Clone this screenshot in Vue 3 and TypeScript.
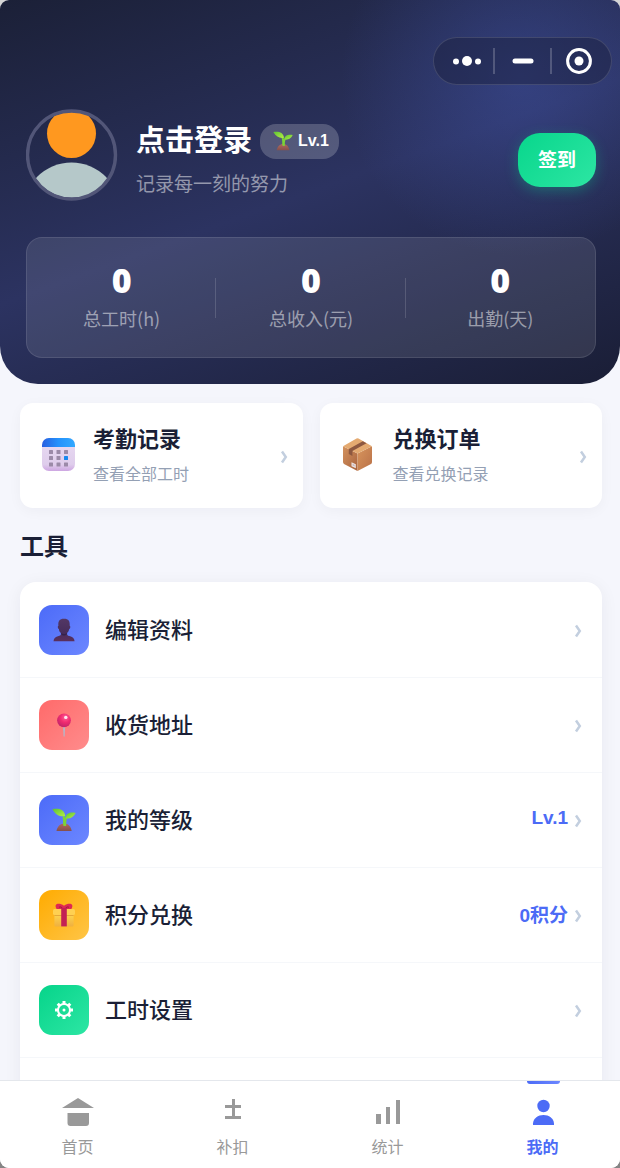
<script setup lang="ts">
import { ref } from 'vue'

interface Stat { value: number; label: string }
interface Entry { icon: string; title: string; hint: string }
interface Tool { icon: string; tone: string; label: string; value?: string }
interface Tab { id: string; label: string }

const stats: Stat[] = [
  { value: 0, label: '总工时(h)' },
  { value: 0, label: '总收入(元)' },
  { value: 0, label: '出勤(天)' },
]
const entries: Entry[] = [
  { icon: 'calendar', title: '考勤记录', hint: '查看全部工时' },
  { icon: 'box', title: '兑换订单', hint: '查看兑换记录' },
]
const tools: Tool[] = [
  { icon: 'bust', tone: 'blue', label: '编辑资料' },
  { icon: 'pin', tone: 'red', label: '收货地址' },
  { icon: 'sprout', tone: 'blue', label: '我的等级', value: 'Lv.1' },
  { icon: 'gift', tone: 'amber', label: '积分兑换', value: '0积分' },
  { icon: 'gear', tone: 'green', label: '工时设置' },
]
const tabs: Tab[] = [
  { id: 'home', label: '首页' },
  { id: 'adjust', label: '补扣' },
  { id: 'chart', label: '统计' },
  { id: 'mine', label: '我的' },
]
const active = ref('mine')
</script>

<template>
  <div class="app">
    <svg class="defs" width="0" height="0" aria-hidden="true">
      <defs>
        <linearGradient id="leaf" x1="0" y1="0" x2="1" y2="1"><stop offset="0" stop-color="#5cc433" /><stop offset="1" stop-color="#b4ee45" /></linearGradient>
        <linearGradient id="soil" x1="0" y1="0" x2="0" y2="1"><stop offset="0" stop-color="#b06a5e" /><stop offset="1" stop-color="#854f4c" /></linearGradient>
        <linearGradient id="calTop" x1="0" y1="0" x2="1" y2="0"><stop offset="0" stop-color="#285fe0" /><stop offset="0.5" stop-color="#2492fc" /><stop offset="1" stop-color="#31a9ff" /></linearGradient>
        <linearGradient id="calBody" x1="0" y1="0" x2="0" y2="1"><stop offset="0" stop-color="#e9dcf2" /><stop offset="0.8" stop-color="#dfcdec" /><stop offset="1" stop-color="#cda6e2" /></linearGradient>
        <linearGradient id="boxLeft" x1="0" y1="0" x2="1" y2="1"><stop offset="0" stop-color="#d3925e" /><stop offset="1" stop-color="#a9633f" /></linearGradient>
        <linearGradient id="boxRight" x1="0" y1="0" x2="1" y2="1"><stop offset="0" stop-color="#d8955d" /><stop offset="1" stop-color="#b97148" /></linearGradient>
        <linearGradient id="bustFill" x1="0" y1="0" x2="0" y2="1"><stop offset="0" stop-color="#533765" /><stop offset="0.6" stop-color="#472d5c" /><stop offset="1" stop-color="#5b2f5d" /></linearGradient>
        <radialGradient id="pinHead" cx="0.6" cy="0.3" r="0.7"><stop offset="0" stop-color="#ff6197" /><stop offset="0.5" stop-color="#f12c70" /><stop offset="1" stop-color="#c4246a" /></radialGradient>
        <linearGradient id="giftFill" x1="0" y1="0" x2="0" y2="1"><stop offset="0" stop-color="#ffd650" /><stop offset="1" stop-color="#efb040" /></linearGradient>
        <clipPath id="calClip"><rect x="1" y="1" width="33" height="33" rx="7" /></clipPath>
        <clipPath id="avatarClip"><circle cx="46" cy="46" r="43" /></clipPath>
      </defs>
      <symbol id="sprout" viewBox="0 0 24 24">
        <path d="M4.500 23c.7-4.400 3.700-7.400 7.700-7.400 4.200 0 6.800 3.200 7.500 7.400z" fill="url(#soil)" />
        <path d="M11.200 17.500c-.2-4.400 0-6.100-.8-9l2.200-.4.800 2.200 1-1.800 1.200.7c-1.600 3-1.300 5.300-1.400 8.500-1 .5-2 .5-3-.2z" fill="#7bd436" />
        <path d="M.4 1.200c5.700-1.200 12-.1 12.800 6.800C8.200 9 4 7.200.4 1.200z" fill="url(#leaf)" />
        <path d="M23.700 4.900c-4.500-1.200-9.900 0-10.300 5.300 5.100.8 8.100-1.100 10.300-5.300z" fill="url(#leaf)" />
      </symbol>
      <symbol id="calendar" viewBox="0 0 35 35">
        <g clip-path="url(#calClip)">
          <rect x="1" y="1" width="33" height="33" fill="url(#calBody)" />
          <rect x="1" y="1" width="33" height="9" fill="url(#calTop)" />
        </g>
        <g fill="#9b8aa8">
          <rect x="8" y="13" width="4" height="4" rx="0.5" /><rect x="15.5" y="13" width="4" height="4" rx="0.5" /><rect x="23" y="13" width="4" height="4" rx="0.5" />
          <rect x="8" y="19" width="4" height="4" rx="0.5" /><rect x="15.5" y="19" width="4" height="4" rx="0.5" />
          <rect x="8" y="25.5" width="4" height="4" rx="0.5" /><rect x="15.5" y="25.5" width="4" height="4" rx="0.5" /><rect x="23" y="25.5" width="4" height="4" rx="0.5" />
        </g>
        <rect x="23" y="19" width="4" height="4" rx="0.5" fill="#1688ef" />
      </symbol>
      <symbol id="box" viewBox="0 0 35 35">
        <path d="M2 9.2 16.500 16.500V34L3 26.900Q2 26.300 2 25z" fill="url(#boxLeft)" />
        <path d="M16.500 16.500 31 9.200V25q0 1.400-1 1.900L16.500 34z" fill="url(#boxRight)" />
        <path d="M2 9.200 15.500 1.500q1-.6 2 0L31 9.200l-14.500 7.400z" fill="#e4aa71" />
        <path d="m7.800 12.100 14-7.900 3.700 2.100-14.100 7.700v5l-3.600-1.900z" fill="#8d5840" />
        <path d="m10.500 25.200 4.300 2.100v4l-4.300-2.100z" fill="#eee5e3" />
        <path d="m11.500 26.700 2.200 1v1.800l-2.200-1z" fill="#c9bac0" />
      </symbol>
      <symbol id="bust" viewBox="0 0 24 24">
        <path d="M1.500 23.300c.2-3.200 2-4.300 5.200-5.200 2.300-.7 2.400-1.700 2.200-3.200C7.400 14 7 12.400 6.900 11c-1.300-.4-1.500-3.200-.5-3.300C6.100 3 7.300.8 12 .8s6 2.300 5.700 6.900c1 .2.8 2.900-.5 3.300-.2 1.500-.8 3-2.100 3.900-.1 1.700.2 2.600 2.300 3.200 3.100.9 5 2 5.200 5.200z" fill="url(#bustFill)" />
        <path d="M8.900 14.900c2 1.500 4.400 1.500 6.200 0-.8 3.500-5.200 3.700-6.200 0z" fill="#34234c" />
      </symbol>
      <symbol id="pin" viewBox="0 0 24 24">
        <path d="M11 12h2.200l-.5 11.500h-1.200z" fill="#b9b3c4" />
        <circle cx="12" cy="7.300" r="6.900" fill="url(#pinHead)" />
        <circle cx="13.800" cy="4.400" r="1.700" fill="#ffe9ef" />
      </symbol>
      <symbol id="gift" viewBox="0 0 24 24">
        <rect x="2.400" y="11" width="19.200" height="12.400" rx="1.500" fill="url(#giftFill)" />
        <rect x="1" y="6" width="22" height="6" rx="1.500" fill="#ffd052" />
        <path d="M2.400 12h19.200v.9H2.400z" fill="#e2a338" />
        <path d="M4.600 6C2.500 2.700 4 .8 6.500.8c2 0 3.500.5 5.500 2 2-1.500 3.500-2 5.500-2 2.500 0 4 1.900 1.900 5.200z" fill="#df2853" />
        <path d="M7 4.400c1-.9 2.800-.5 3.600 1.100M17 4.400c-1-.9-2.800-.5-3.600 1.100" fill="none" stroke="#9f183e" />
        <path d="M9.200 5h5.600v18.400H9.200z" fill="#c32054" />
      </symbol>
      <symbol id="gear" viewBox="0 0 24 24">
        <circle cx="12" cy="12" r="6" fill="none" stroke="#fff" stroke-width="2" />
        <circle cx="12" cy="12" r="1.500" fill="#fff" />
        <path d="M12 6V3M12 18v3M6 12H3M18 12h3M7.800 7.800 5.700 5.700M16.200 7.800l2.100-2.100M7.800 16.200l-2.100 2.100M16.200 16.200l2.100 2.100" stroke="#fff" stroke-width="3" />
      </symbol>
      <symbol id="chevron" viewBox="0 0 8 14">
        <path d="M2 1.500 5.800 7 2 12.500" fill="none" stroke="#c3cfdf" stroke-width="2.500" />
      </symbol>
    </svg>

    <main class="content">
      <header class="hero">
        <div class="capsule">
          <button type="button" aria-label="更多">
            <svg width="30" height="12" viewBox="0 0 30 12"><g fill="#fff"><circle cx="4" cy="6.500" r="3" /><circle cx="15" cy="6" r="5" /><circle cx="26" cy="6.500" r="3" /></g></svg>
          </button>
          <button type="button" aria-label="最小化">
            <svg width="22" height="6" viewBox="0 0 22 6"><rect x="0.5" y="0.5" width="21" height="5" rx="2.500" fill="#fff" /></svg>
          </button>
          <button type="button" aria-label="关闭">
            <svg width="26" height="26" viewBox="0 0 26 26"><circle cx="13" cy="13" r="11.400" fill="none" stroke="#fff" stroke-width="3" /><circle cx="13" cy="13" r="4.500" fill="#fff" /></svg>
          </button>
        </div>

        <div class="profile">
          <svg class="avatar" viewBox="0 0 92 92" aria-hidden="true">
            <g clip-path="url(#avatarClip)">
              <circle cx="45.500" cy="24.500" r="24.500" fill="#ff981f" />
              <circle cx="45.500" cy="102" r="48.500" fill="#b5c8c9" />
            </g>
            <circle cx="45.500" cy="46" r="44" fill="none" stroke="#525678" stroke-width="3.400" />
          </svg>
          <div class="who">
            <div class="name-line">
              <h1>点击登录</h1>
              <span class="badge"><svg width="20" height="20" aria-hidden="true"><use href="#sprout" /></svg>Lv.1</span>
            </div>
            <p>记录每一刻的努力</p>
          </div>
          <button class="sign" type="button">签到</button>
        </div>

        <dl class="stats">
          <div v-for="s in stats" :key="s.label" class="stat">
            <dt>{{ s.label }}</dt>
            <dd>{{ s.value }}</dd>
          </div>
        </dl>
      </header>

      <nav class="entries">
        <a v-for="e in entries" :key="e.title" class="entry" href="#">
          <svg class="entry-icon" width="35" height="35" aria-hidden="true"><use :href="'#' + e.icon" /></svg>
          <span class="entry-text"><strong>{{ e.title }}</strong><small>{{ e.hint }}</small></span>
          <svg class="chevron" width="8" height="14" aria-hidden="true"><use href="#chevron" /></svg>
        </a>
      </nav>

      <h2>工具</h2>
      <ul class="tools">
        <li v-for="t in tools" :key="t.label">
          <a class="tool" href="#">
            <span class="tile" :class="t.tone"><svg width="24" height="24" aria-hidden="true"><use :href="'#' + t.icon" /></svg></span>
            <span class="tool-label">{{ t.label }}</span>
            <span v-if="t.value" class="tool-value">{{ t.value }}</span>
            <svg class="chevron" width="8" height="14" aria-hidden="true"><use href="#chevron" /></svg>
          </a>
        </li>
      </ul>
    </main>

    <nav class="tabbar">
      <button v-for="t in tabs" :key="t.id" type="button" class="tab" :class="{ active: active === t.id }" @click="active = t.id">
        <svg width="34" height="32" viewBox="0 0 34 32" fill="currentColor" aria-hidden="true">
          <path v-if="t.id === 'home'" d="M17 2 33 12H1zM6.500 17h21.500v10a3 3 0 0 1-3 3H9.500a3 3 0 0 1-3-3z" />
          <path v-else-if="t.id === 'adjust'" d="M16 3h3v6h6v3h-6v8h6v3H9v-3h7v-8H9V9h7z" />
          <path v-else-if="t.id === 'chart'" d="M5 18h5v10H5zM15 11h4v17h-4zM25 4h4v24h-4z" />
          <g v-else><circle cx="17.500" cy="10" r="6.200" /><path d="M7 29v-1.500C7.500 22 12 19 17.500 19S27.500 22 28 27.500V29z" /></g>
        </svg>
        <span>{{ t.label }}</span>
      </button>
    </nav>
  </div>
</template>

<style>
body { background: linear-gradient(#d5d5d5, #858585); }
</style>

<style scoped>
* { box-sizing: border-box; }
.app {
  display: flex;
  flex-direction: column;
  height: 100vh;
  overflow: hidden;
  border-radius: 9px;
  background: #f5f6fc;
  color: #1a1f36;
  font-family: "Liberation Sans", "Noto Sans CJK SC", sans-serif;
}
.defs { position: absolute; }
button { border: 0; padding: 0; background: none; color: inherit; font: inherit; cursor: pointer; }
a { color: inherit; text-decoration: none; }
h1, h2, p, ul, dl, dd { margin: 0; padding: 0; }
.content { flex: 1; min-height: 0; overflow: hidden; }

.hero {
  padding: 37px 24px 26px 26px;
  border-radius: 0 0 38px 38px;
  background:
    radial-gradient(circle at 84% 20%, rgba(67, 88, 180, 0.4), rgba(67, 88, 180, 0) 180px),
    linear-gradient(160deg, #1b2037 0%, #2c3361 50%, #1a1e36 100%);
  color: #fff;
}
.capsule {
  display: flex;
  align-items: center;
  width: 179px;
  height: 48px;
  margin: 0 -16px 24px auto;
  padding: 0 6px;
  border: 1px solid rgba(255, 255, 255, 0.13);
  border-radius: 24px;
  background: rgba(27, 30, 60, 0.45);
}
.capsule button { display: flex; flex: 1; align-items: center; justify-content: center; height: 26px; }
.capsule button:nth-child(2) { flex: 0 0 57px; }
.capsule button + button { border-left: 2px solid rgba(255, 255, 255, 0.2); }

.profile { display: flex; align-items: center; }
.avatar { flex: none; width: 92px; height: 92px; }
.who { flex: 1; margin-left: 18px; padding-top: 12px; }
.name-line { display: flex; align-items: center; gap: 8px; height: 36px; }
h1 { font-size: 29px; line-height: 36px; font-weight: 700; }
.badge {
  display: flex;
  align-items: center;
  gap: 5px;
  height: 35px;
  padding: 0 10px 0 13px;
  border-radius: 16px;
  background: rgba(255, 255, 255, 0.2);
  font-size: 16px;
  font-weight: 700;
}
.who p { margin-top: 12px; font-size: 19px; line-height: 28px; color: rgba(255, 255, 255, 0.5); }
.sign {
  width: 78px;
  height: 54px;
  margin-top: 10px;
  padding-bottom: 3px;
  border-radius: 22px;
  background: linear-gradient(135deg, #08d68c, #2de6a3);
  box-shadow: 0 4px 14px rgba(8, 214, 140, 0.3);
  font-size: 19px;
  font-weight: 700;
}
.stats {
  display: flex;
  margin-top: 36px;
  padding: 23px 0 25px;
  border: 1px solid rgba(255, 255, 255, 0.1);
  border-radius: 16px;
  background: rgba(255, 255, 255, 0.1);
}
.stat { display: flex; flex: 1; flex-direction: column-reverse; align-items: center; position: relative; }
.stat + .stat::before {
  content: "";
  position: absolute;
  left: -1px;
  top: 17px;
  width: 1px;
  height: 40px;
  background: rgba(255, 255, 255, 0.15);
}
.stat dd { font-family: "Open Sans", sans-serif; font-size: 34px; line-height: 38px; font-weight: 800; }
.stat dt { margin-top: 6px; font-family: "Noto Sans CJK SC", sans-serif; font-size: 18px; line-height: 27px; color: rgba(255, 255, 255, 0.5); }

.entries { display: flex; gap: 17px; margin: 19px 18px 0 20px; }
.entry {
  display: flex;
  flex: 1;
  align-items: center;
  height: 105px;
  padding: 0 15px 0 21px;
  border-radius: 13px;
  background: #fff;
  box-shadow: 0 3px 14px rgba(26, 31, 54, 0.04);
}
.entry-icon { margin-bottom: 2px; }
.entry-text { display: flex; flex: 1; flex-direction: column; margin-left: 17px; padding-top: 2px; }
.entry strong { font-size: 22px; line-height: 36px; font-weight: 700; }
.entry small { font-size: 16px; line-height: 34px; color: #94a0b4; }
.chevron { flex: none; margin-top: 2px; }

h2 { margin: 21px 20px 18px; font-size: 24px; line-height: 35px; font-weight: 700; }
.tools {
  margin: 0 18px 20px 20px;
  padding: 1px 0 95px;
  border-radius: 16px;
  background: #fff;
  box-shadow: 0 3px 18px rgba(26, 31, 54, 0.06);
  list-style: none;
}
.tool { display: flex; align-items: center; height: 95px; padding: 0 20px 0 19px; border-bottom: 1px solid #f5f7fa; }
.tile { display: flex; flex: none; align-items: center; justify-content: center; width: 50px; height: 50px; border-radius: 13px; }
.blue { background: linear-gradient(135deg, #4c6bf8, #6c87ff); }
.red { background: linear-gradient(135deg, #ff6a6a, #ff8c8c); }
.amber { background: linear-gradient(135deg, #ffab00, #ffc547); }
.green { background: linear-gradient(135deg, #06d48a, #2de6a4); }
.tool-label { flex: 1; margin-left: 16px; padding-bottom: 5px; font-size: 22px; font-weight: 500; }
.tool-value { margin-right: 6px; padding-bottom: 4px; color: #4c6bf6; font-size: 19px; font-weight: 700; }

.tabbar { display: flex; flex: none; height: 88px; border-top: 1px solid #e4e7ec; background: #fff; }
.tab { display: flex; flex: 1; flex-direction: column; align-items: center; padding-top: 15px; color: #999; font-size: 16px; line-height: 24px; position: relative; }
.tab span { margin-top: 8px; }
.tab.active { color: #4c6bf6; font-weight: 700; }
.tab.active::before {
  content: "";
  position: absolute;
  top: 0;
  left: 50%;
  width: 33px;
  height: 3px;
  margin-left: -16px;
  border-radius: 0 0 3px 3px;
  background: linear-gradient(90deg, #4c6bf6, #6c87ff);
}
</style>
